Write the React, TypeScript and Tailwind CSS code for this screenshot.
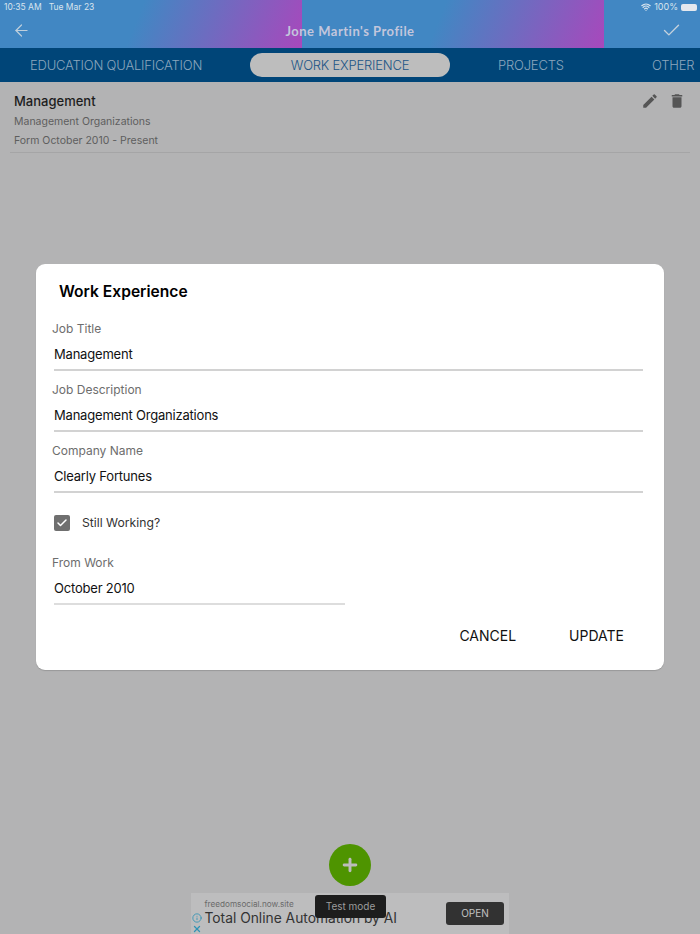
import React from "react";
import { ArrowLeft, Check, X, Info, Plus, Wifi } from "lucide-react";

function Field({ label, value, narrow }: { label: string; value: string; narrow?: boolean }) {
  return (
    <div className="flex flex-col">
      <div className="pl-4 pt-[1px] text-[12px] leading-[18px] text-[#6d6d6d]">{label}</div>
      <div className={`ml-[18px] mt-[6px] h-[27px] border-b-2 text-[13px] leading-[20px] tracking-[-0.2px] text-[#111] ${narrow ? "w-[291px] border-[#dddddd]" : "w-[589px] border-[#d2d2d2]"}`}>
        {value}
      </div>
    </div>
  );
}

export default function App() {
  return (
    <div className="relative flex h-[934px] w-[700px] flex-col overflow-hidden bg-[#b3b3b4] font-['Inter',sans-serif]">
      <header className="relative flex h-[48px] shrink-0 bg-[#4187c3]">
        <div className="h-full w-[302px] bg-[linear-gradient(112deg,#4187c3_45%,#a848bc_100%)]" />
        <div className="h-full w-[302px] bg-[linear-gradient(112deg,#4187c3_45%,#a848bc_100%)]" />
        <div className="absolute left-[4px] top-[1px] flex gap-[7px] text-[8.5px] leading-[12px] text-[#d8e4ee]">
          <span>10:35 AM</span>
          <span>Tue Mar 23</span>
        </div>
        <div className="absolute right-[3px] top-[1px] flex items-center gap-[3px] text-[9px] leading-[12px] text-[#d8e4ee]">
          <Wifi size={10} strokeWidth={3} />
          <span>100%</span>
          <span className="block h-[7px] w-[16px] rounded-[2px] bg-[#e4e8ee]" />
        </div>
        <ArrowLeft className="absolute left-[12px] top-[21px]" size={19} strokeWidth={1.5} color="#bfcfdc" />
        <div className="absolute inset-x-0 top-[23px] text-center font-['Lato',sans-serif] text-[13px] font-bold leading-[16px] tracking-[0.5px] text-[#c3c6dc]">
          Jone Martin's Profile
        </div>
        <Check className="absolute left-[661px] top-[20px]" size={21} strokeWidth={1.6} color="#c5d2dd" />
      </header>

      <nav className="relative flex h-[34px] shrink-0 items-center bg-[#004578] text-[13px] font-light tracking-[-0.2px] text-[#8ba6bd]">
        <span className="absolute left-[30px] pt-[2px]">EDUCATION QUALIFICATION</span>
        <span className="absolute left-[250px] flex h-[24px] w-[200px] items-center justify-center rounded-full bg-[#bdbdbd] pt-[2px] text-[#1c5586]">WORK EXPERIENCE</span>
        <span className="absolute left-[498px] pt-[2px]">PROJECTS</span>
        <span className="absolute left-[652px] pt-[2px]">OTHER</span>
      </nav>

      <section className="mx-[10px] flex h-[71px] shrink-0 justify-between border-b border-[#a5a5a6] pl-[4px] pt-[10px]">
        <div className="flex flex-col">
          <div className="text-[13px] font-medium leading-[18px] text-[#1d1d1d]">Management</div>
          <div className="mt-[4px] text-[10.5px] leading-[15px] text-[#5e5e5e]">Management Organizations</div>
          <div className="mt-[4px] text-[10.5px] leading-[15px] text-[#5e5e5e]">Form October 2010 - Present</div>
        </div>
        <div className="flex items-start gap-[9px] pr-[4px]">
          <svg width="18" height="18" viewBox="0 0 24 24" fill="#555"><path d="M3 17.25V21h3.75L17.81 9.94l-3.75-3.75L3 17.25zM20.71 7.04a1 1 0 0 0 0-1.41l-2.34-2.34a1 1 0 0 0-1.41 0l-1.83 1.83 3.75 3.75 1.83-1.83z" /></svg>
          <svg width="18" height="18" viewBox="0 0 24 24" fill="#555"><path d="M6 19c0 1.1.9 2 2 2h8c1.1 0 2-.9 2-2V7H6v12zM19 4h-3.5l-1-1h-5l-1 1H5v2h14V4z" /></svg>
        </div>
      </section>

      <main className="flex flex-1 flex-col items-center justify-end">
        <button className="mb-[7px] flex h-[42px] w-[42px] items-center justify-center rounded-full bg-[#4e9400]">
          <Plus size={20} strokeWidth={3.5} color="#bcbcbc" />
        </button>
        <div className="relative h-[41px] w-[318px] bg-[#bdbdbe]">
          <span className="absolute left-[13.5px] top-[4px] text-[8.2px] leading-[14px] text-[#6a6a6a]">freedomsocial.now.site</span>
          <span className="absolute left-[13.5px] top-[16px] text-[13.8px] leading-[18px] text-[#333]">Total Online Automation by AI</span>
          <Info className="absolute left-[1px] top-[20px]" size={10} strokeWidth={2} color="#2f93b5" />
          <X className="absolute left-[1px] top-[31px]" size={10} strokeWidth={3} color="#2f93b5" />
          <span className="absolute left-[255px] top-[9px] flex h-[23px] w-[58px] items-center justify-center rounded-[3px] bg-[#323232] text-[10px] text-[#c2c2c2]">OPEN</span>
          <span className="absolute left-[124px] top-[2px] flex h-[23px] w-[71px] items-center justify-center rounded-[3px] bg-[#1d1d1d] text-[10px] text-[#9c9c9c]">Test mode</span>
        </div>
      </main>

      <div className="absolute left-[36px] top-[264px] flex h-[406px] w-[628px] flex-col rounded-[9px] bg-white shadow-[0_1px_1px_rgba(0,0,0,0.15)]">
        <h2 className="pl-[23px] pt-[18px] text-[15.6px] font-semibold leading-[20px] text-black">Work Experience</h2>
        <div className="mt-[17px] flex flex-col gap-[9px]">
          <Field label="Job Title" value="Management" />
          <Field label="Job Description" value="Management Organizations" />
          <Field label="Company Name" value="Clearly Fortunes" />
        </div>
        <div className="ml-[18px] mt-[22px] flex items-center gap-[12px]">
          <span className="flex h-[16px] w-[16px] items-center justify-center rounded-[2px] bg-[#6f6f6f]">
            <Check size={12} strokeWidth={3} color="#fff" />
          </span>
          <span className="text-[12.2px] leading-[16px] text-[#333]">Still Working?</span>
        </div>
        <div className="mt-[22px]">
          <Field label="From Work" value="October 2010" narrow />
        </div>
        <div className="mt-[21px] flex justify-end gap-[53px] pr-[40px] text-[14px] leading-[20px] text-[#111]">
          <span>CANCEL</span>
          <span>UPDATE</span>
        </div>
      </div>
    </div>
  );
}
